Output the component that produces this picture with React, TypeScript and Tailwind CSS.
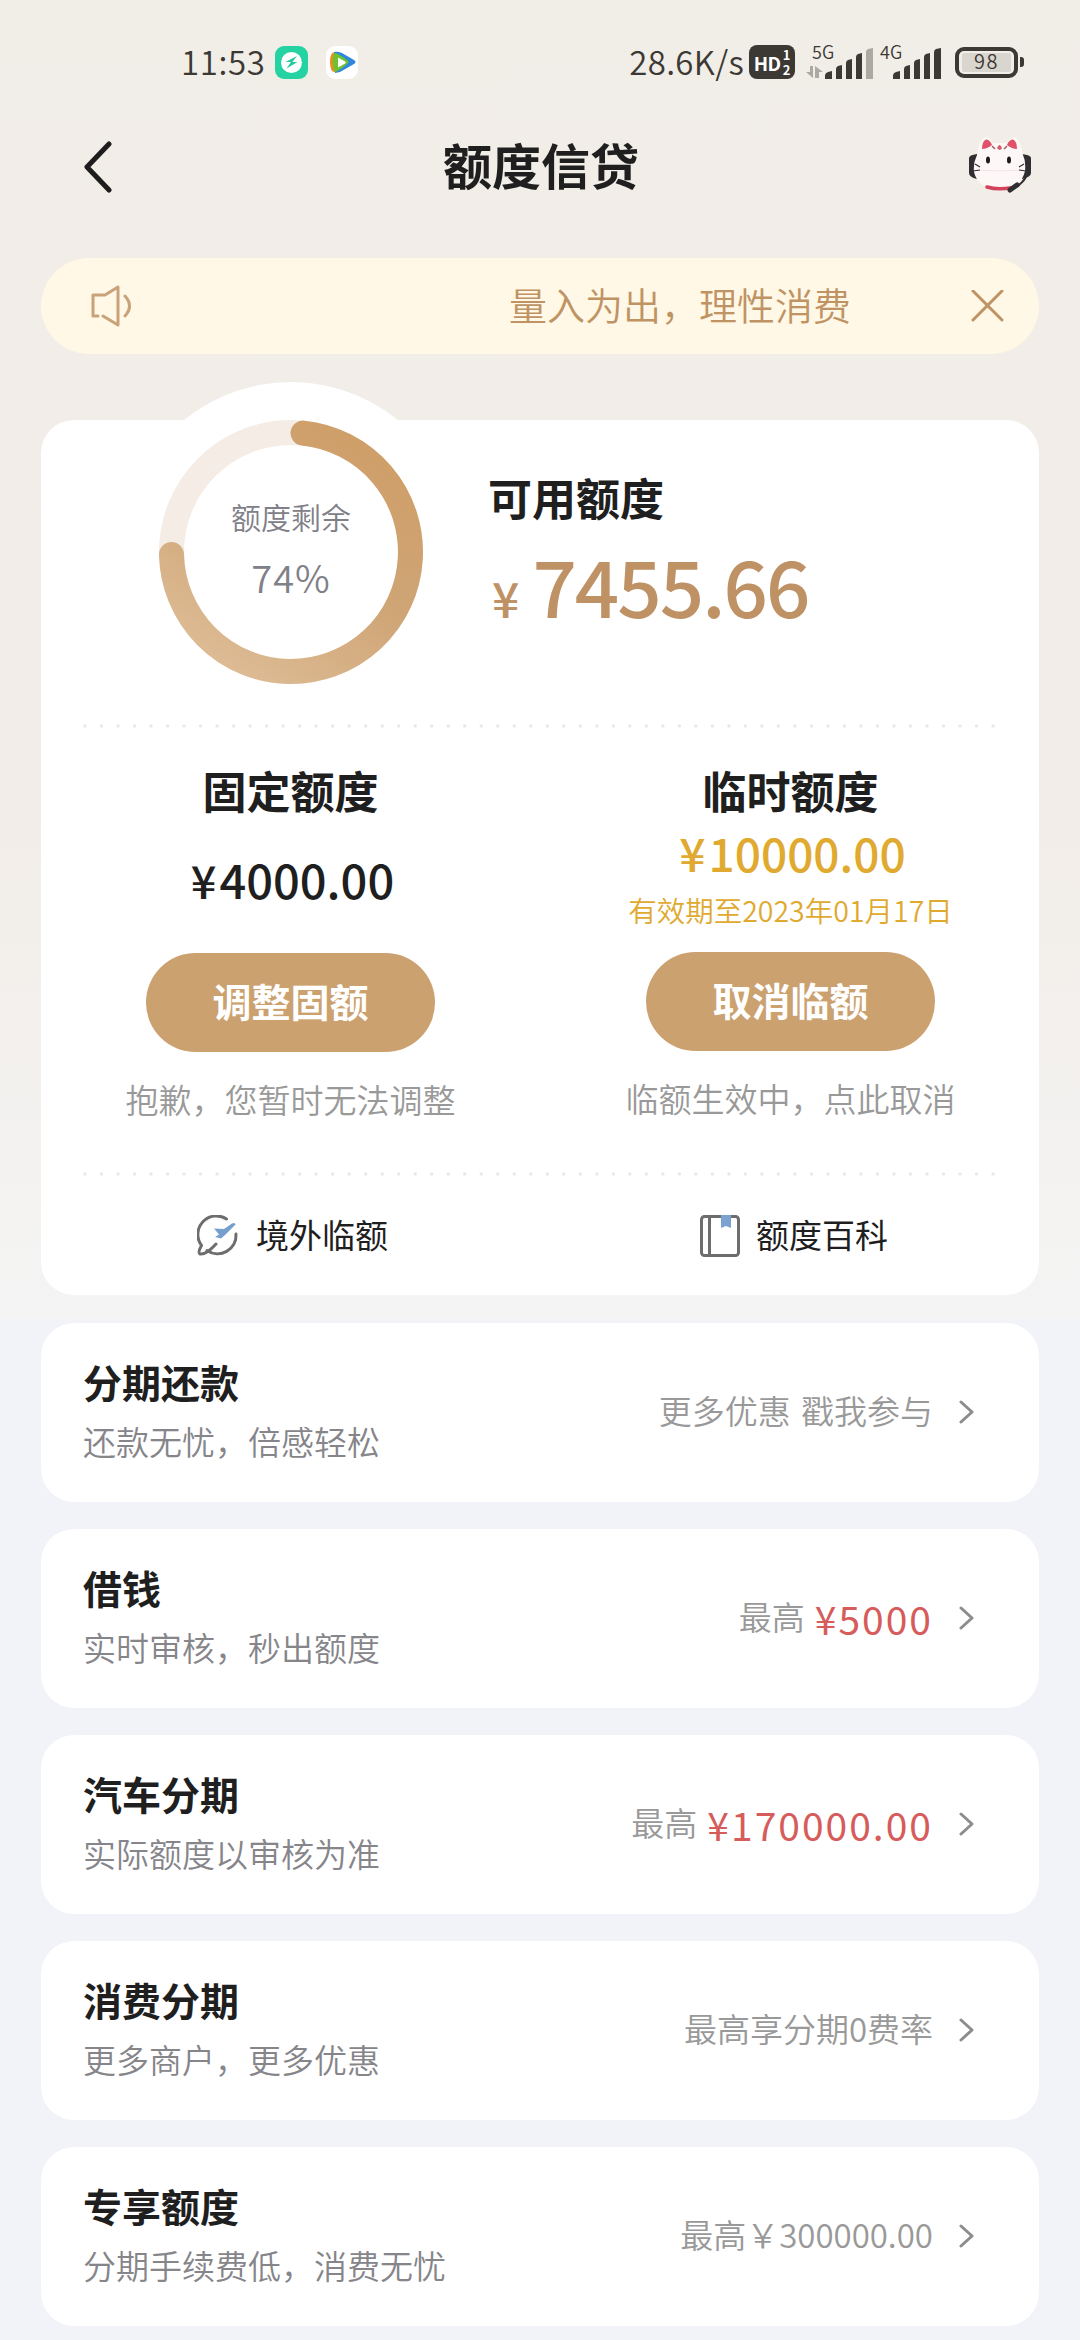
const FONT = "font-['Noto_Sans_CJK_SC',sans-serif]";

const rows = [
  { title: "分期还款", desc: "还款无忧，倍感轻松", note: "更多优惠 戳我参与" },
  { title: "借钱", desc: "实时审核，秒出额度", note: "最高", amount: "¥5000" },
  { title: "汽车分期", desc: "实际额度以审核为准", note: "最高", amount: "¥170000.00" },
  { title: "消费分期", desc: "更多商户，更多优惠", note: "最高享分期0费率" },
  { title: "专享额度", desc: "分期手续费低，消费无忧", note: "最高￥300000.00" },
];

const Signal = ({ weak = false }: { weak?: boolean }) => (
  <svg width="48" height="31" viewBox="0 0 48 31" fill="#3c3834">
    <path d="M0 31v-3q0-3 3-4l4-1v8z" />
    <path d="M11 31V21q0-2 2-3l4-1v14z" />
    <path d="M21 31V15q0-2 2-3l4-1v20z" />
    <path d="M31 31V9q0-2 2-3l4-1v26z" />
    <path d="M41 31V4q0-2 2-3l5-1v31z" fill={weak ? "#aca8a2" : "#3c3834"} />
  </svg>
);

const StatusBar = () => (
  <div className="flex h-[124px] items-center justify-between pl-[181px] pr-[56px] text-[#3c3834]">
    <div className="flex items-center">
      <span className="w-[94px] pb-[2px] text-[33px] font-[350] leading-none tracking-[0.6px]">11:53</span>
      <svg width="33" height="33" viewBox="0 0 33 33">
        <rect width="33" height="33" rx="9" fill="#24d3a1" />
        <circle cx="16.5" cy="16.5" r="10.5" fill="#fff" />
        <path d="M22 10 10.500 16h5.500l-4.500 6.500L22.500 16h-5.200z" fill="#24c99b" />
      </svg>
      <svg className="ml-[18px]" width="32" height="33" viewBox="0 0 32 33">
        <rect width="32" height="33" rx="9" fill="#fff" />
        <path d="M9 6q-5 0-5 10t5 10l4-2V8z" fill="#f08a22" />
        <path d="M8 6q3-1 8 1l12 7q3 2 0 4l-14 8-5 1z" fill="#2f86dc" />
        <path d="M8 7q4 0 13 7 3 2 0 4-8 7-12 8-4-9-1-19z" fill="#6cc32f" />
        <path d="M12 11.500l7 4q1.500 1 0 2l-7 4z" fill="#fff" />
      </svg>
    </div>
    <div className="flex items-center">
      <span className="mr-[5px] pb-[2px] text-[33px] font-[350] leading-none tracking-[0.3px]">28.6K/s</span>
      <div className="flex h-[34px] w-[46px] items-center justify-center gap-[2px] rounded-[8px] bg-[#3c3834] text-white">
        <span className="text-[19px] font-bold leading-none tracking-[-0.5px]">HD</span>
        <span className="flex flex-col text-[13px] font-bold leading-[15px]">
          <span>1</span>
          <span>2</span>
        </span>
      </div>
      <div className="relative ml-[11px] flex h-[34px] w-[67px] items-end justify-end">
        <svg className="absolute bottom-[1px] left-0" width="17" height="12" viewBox="0 0 17 12" fill="#aca8a2">
          <path d="M4 0h3v12L0 6h4zM9 0l8 6h-4v6H9z" />
        </svg>
        <Signal weak />
        <span className="absolute -top-[3px] left-[6px] text-[18px] font-[350] leading-none">5G</span>
      </div>
      <div className="relative ml-[7px] flex h-[34px] w-[61px] items-end justify-end">
        <Signal />
        <span className="absolute -top-[3px] left-0 text-[18px] font-[350] leading-none">4G</span>
      </div>
      <div className="ml-[14px] flex h-[31px] w-[63px] items-center justify-center rounded-[9px] border-4 border-[#3c3834] p-[3px]">
        <span className="flex h-[19px] w-full items-center justify-center rounded-[2px] bg-[#d9d5cf] pb-[2px] text-[20px] font-[350] leading-none tracking-[1.5px]">98</span>
      </div>
      <div className="ml-[2px] h-[10px] w-[4px] rounded-r-[3px] bg-[#3c3834]" />
    </div>
  </div>
);

const CatAvatar = () => (
  <svg width="64" height="58" viewBox="0 0 64 58">
    <path d="M9 17q-8 1-8 4v15q0 4 8 6zM54 17q9 1 9 4v15q0 4-9 6z" fill="#302e30" />
    <path d="M9 18Q11 1 18 0q4 1 7 6h14q3-5 7-6 6 1 9 18 3 6 2 16-4 18-25 18Q10 52 6 35q-1-9 3-17z" fill="#fdf8f7" />
    <path d="M14 12q0-8 4-9.500 4 0 6 5.500-5 4-10 4zM49 12q0-8-4-9.500-4 0-6 5.500 5 4 10 4z" fill="#e0526a" />
    <path d="M29 11q2.500-6 5 0-2 4-5 0z" fill="#d3606c" />
    <path d="M24 9l3 3M39 9l-3 3" stroke="#a85c62" strokeWidth="1.5" />
    <path d="M8 33q24 2 46 0" stroke="#f0e5e4" strokeWidth="1" fill="none" />
    <path d="M19 50q10 3 23 1" stroke="#d3415b" strokeWidth="3.5" fill="none" strokeLinecap="round" />
    <path d="M58 40q-4 7-13 12" stroke="#302e30" strokeWidth="2" fill="none" />
    <path d="M42 53l7-5" stroke="#302e30" strokeWidth="5" strokeLinecap="round" />
    <path d="M7 27l5 3M5 34l7-1M56 27l-5 3M58 34l-7-1" stroke="#302e30" strokeWidth="1.2" />
    <ellipse cx="20" cy="23" rx="2" ry="3.5" fill="#1d1b1c" />
    <ellipse cx="41" cy="23" rx="2" ry="3.5" fill="#1d1b1c" />
  </svg>
);

const Header = () => (
  <header className="flex h-[84px] items-center justify-between pl-[82px] pr-[48px]">
    <svg width="64" height="54" viewBox="0 0 64 54" fill="none" stroke="#1d1d1d" strokeWidth="5" strokeLinecap="round" strokeLinejoin="round">
      <path d="M27 5 5 28l22 23" />
    </svg>
    <h1 className="mr-[32px] pb-[6px] text-[49px] font-bold leading-none text-[#1f1f1f]">额度信贷</h1>
    <CatAvatar />
  </header>
);

const Notice = () => (
  <div className="mx-[41px] mt-[50px] flex h-[96px] items-center rounded-full bg-[#fff8e6] pl-[49px] pr-[35px] text-[#bf9364]">
    <svg width="46" height="42" viewBox="0 0 46 42" fill="none" stroke="#c9a27a" strokeWidth="3" strokeLinecap="round" strokeLinejoin="round">
      <path d="M8 31H3V10h12L28 2v38l-15-9" />
      <path d="M35 11q9 10 0 20" />
    </svg>
    <span className="ml-[373px] flex-1 pb-[4px] text-[38px] font-[350] leading-none">量入为出，理性消费</span>
    <svg width="33" height="33" viewBox="0 0 33 33" stroke="#bf9364" strokeWidth="3" strokeLinecap="round">
      <path d="M2 1l29 29M31 1 2 30" />
    </svg>
  </div>
);

// ring radius 119.5, arc starts just after 12 o'clock and runs clockwise to 9 o'clock
const QuotaRing = () => (
  <div className="relative h-[340px] w-[340px] rounded-full bg-white">
    <svg className="absolute inset-0" width="340" height="340" viewBox="0 0 340 340" fill="none" strokeWidth="25">
      <defs>
        <linearGradient id="ring" x1="0.75" y1="0" x2="0.1" y2="1">
          <stop offset="0" stopColor="#cf9f69" />
          <stop offset="0.45" stopColor="#cfa576" />
          <stop offset="1" stopColor="#dfbe98" />
        </linearGradient>
      </defs>
      <circle cx="170" cy="170" r="119.5" stroke="#f4ece5" />
      <path d="M182 51.1A119.5 119.5 0 1 1 50.5 172.5" stroke="url(#ring)" strokeLinecap="round" />
    </svg>
    <div className="relative flex h-full flex-col items-center pt-[117px] text-[#808088]">
      <span className="text-[30px] font-[350] leading-[34px]">额度剩余</span>
      <span className="mt-[24px] text-[38px] font-[350] leading-[40px] tracking-[1px]">74%</span>
    </div>
  </div>
);

const DottedLine = () => (
  <svg className="mx-[42px] block" width="914" height="4" viewBox="0 0 914 4">
    <line x1="2" y1="2" x2="914" y2="2" stroke="#e9e9e9" strokeWidth="3.5" strokeLinecap="round" strokeDasharray="0.01 16.5" />
  </svg>
);

const PillButton = ({ label }: { label: string }) => (
  <button className="flex h-[99px] w-[289px] items-center justify-center rounded-full bg-[#cba16f] pb-[4px] text-[39px] font-bold leading-none text-white">
    {label}
  </button>
);

const OverseasIcon = () => (
  <svg width="42" height="42" viewBox="0 0 42 42" fill="none">
    <path d="M29.500 4A18.500 18.500 0 0 0 4.500 30.500q-4 7-1.500 8.500 6 1 16-10" stroke="#6d6d6d" strokeWidth="3" strokeLinecap="round" strokeLinejoin="round" />
    <path d="M10 35.500A18.500 18.500 0 0 0 39 19" stroke="#6d6d6d" strokeWidth="3" strokeLinecap="round" />
    <path d="M35 8.500q3-1.500 3.500 1L28 20l-4 3.500-6-1.500 4-2.500-5-6 10 .5z" fill="#75a0cd" />
  </svg>
);

const BookIcon = () => (
  <svg width="40" height="42" viewBox="0 0 40 42" fill="none">
    <rect x="1.5" y="1.5" width="37" height="39" rx="3" stroke="#6d6d6d" strokeWidth="3" />
    <path d="M9.500 2v38" stroke="#6d6d6d" strokeWidth="3" />
    <path d="M21 0h10v13l-5-2-5 2z" fill="#7ba2d0" />
  </svg>
);

const QuotaCard = () => (
  <section className="mx-[41px] mt-[66px] flex h-[875px] flex-col rounded-[33px] bg-white text-[#1f1f1f]">
    <div className="-mt-[38px] flex h-[342px] pl-[80px]">
      <QuotaRing />
      <div className="ml-[27px] pt-[92px]">
        <p className="text-[44px] font-bold leading-[46px]">可用额度</p>
        <div className="mt-[19px] flex items-baseline leading-[90px] text-[#bf9265]">
          <span className="ml-[4px] mr-[13px] text-[48px] font-medium">¥</span>
          <span className="text-[78px] font-medium tracking-[-2px]">7455.66</span>
        </div>
      </div>
    </div>
    <DottedLine />
    <div className="grid h-[444px] grid-cols-2">
      <div className="flex flex-col items-center pt-[39px]">
        <p className="text-[44px] font-bold leading-[46px]">固定额度</p>
        <p className="mt-[36px] pl-[4px] text-[47px] font-medium leading-[60px]">
          <span className="mr-[3px] text-[45px]">¥</span>4000.00
        </p>
        <div className="mt-[43px]"><PillButton label="调整固额" /></div>
        <p className="mt-[28px] text-[33px] font-[350] leading-[38px] text-[#999]">抱歉，您暂时无法调整</p>
      </div>
      <div className="flex flex-col items-center pl-[2px] pt-[39px]">
        <p className="text-[44px] font-bold leading-[46px]">临时额度</p>
        <p className="mt-[9px] pl-[4px] text-[46px] font-medium leading-[60px] text-[#e0a92f]">
          <span className="mr-[3px]">¥</span>10000.00
        </p>
        <p className="mt-[12px] text-[28.5px] font-[350] leading-[32px] text-[#e0a92f]">有效期至2023年01月17日</p>
        <div className="mt-[26px]"><PillButton label="取消临额" /></div>
        <p className="mt-[28px] text-[33px] font-[350] leading-[38px] text-[#999]">临额生效中，点此取消</p>
      </div>
    </div>
    <DottedLine />
    <div className="grid h-[119px] grid-cols-2 text-[33px] leading-none">
      <div className="flex items-center justify-center gap-[17px] pl-[4px]">
        <OverseasIcon />
        <span className="pb-[3px]">境外临额</span>
      </div>
      <div className="flex items-center justify-center gap-[16px] pl-[9px]">
        <BookIcon />
        <span className="pb-[3px]">额度百科</span>
      </div>
    </div>
  </section>
);

const ServiceRow = ({ title, desc, note, amount }: (typeof rows)[number]) => (
  <li className="flex h-[179px] items-center justify-between rounded-[33px] bg-white pl-[42px] pr-[65px]">
    <div className="pb-[5px]">
      <p className="text-[39px] font-bold leading-[44px] text-[#1f1f1f]">{title}</p>
      <p className="mt-[18px] text-[33px] font-[350] leading-[40px] text-[#85858a]">{desc}</p>
    </div>
    <div className="flex items-center">
      <span className="pb-[5px] text-[33px] font-[350] leading-[40px] text-[#999] [word-spacing:3px]">{note}</span>
      {amount && <span className="ml-[10px] pb-[2px] text-[39px] leading-[40px] tracking-[2px] text-[#d65c5c]">{amount}</span>}
      <svg className="ml-[26px]" width="15" height="26" viewBox="0 0 15 26" fill="none" stroke="#8c8c8c" strokeWidth="3" strokeLinecap="round" strokeLinejoin="round">
        <path d="M2 2l11 10L2 22" />
      </svg>
    </div>
  </li>
);

export default function App() {
  return (
    <div className={`h-[2340px] w-[1080px] overflow-hidden bg-[#f2f3f9] ${FONT}`}>
      <div className="h-[1319px] bg-linear-to-b from-[#f1ede7] via-[#f2ede8] via-60% to-[#f4f4f4]">
        <StatusBar />
        <Header />
        <Notice />
        <QuotaCard />
      </div>
      <ul className="mx-[41px] mt-[4px] flex flex-col gap-[27px]">
        {rows.map((row) => (
          <ServiceRow key={row.title} {...row} />
        ))}
      </ul>
    </div>
  );
}
